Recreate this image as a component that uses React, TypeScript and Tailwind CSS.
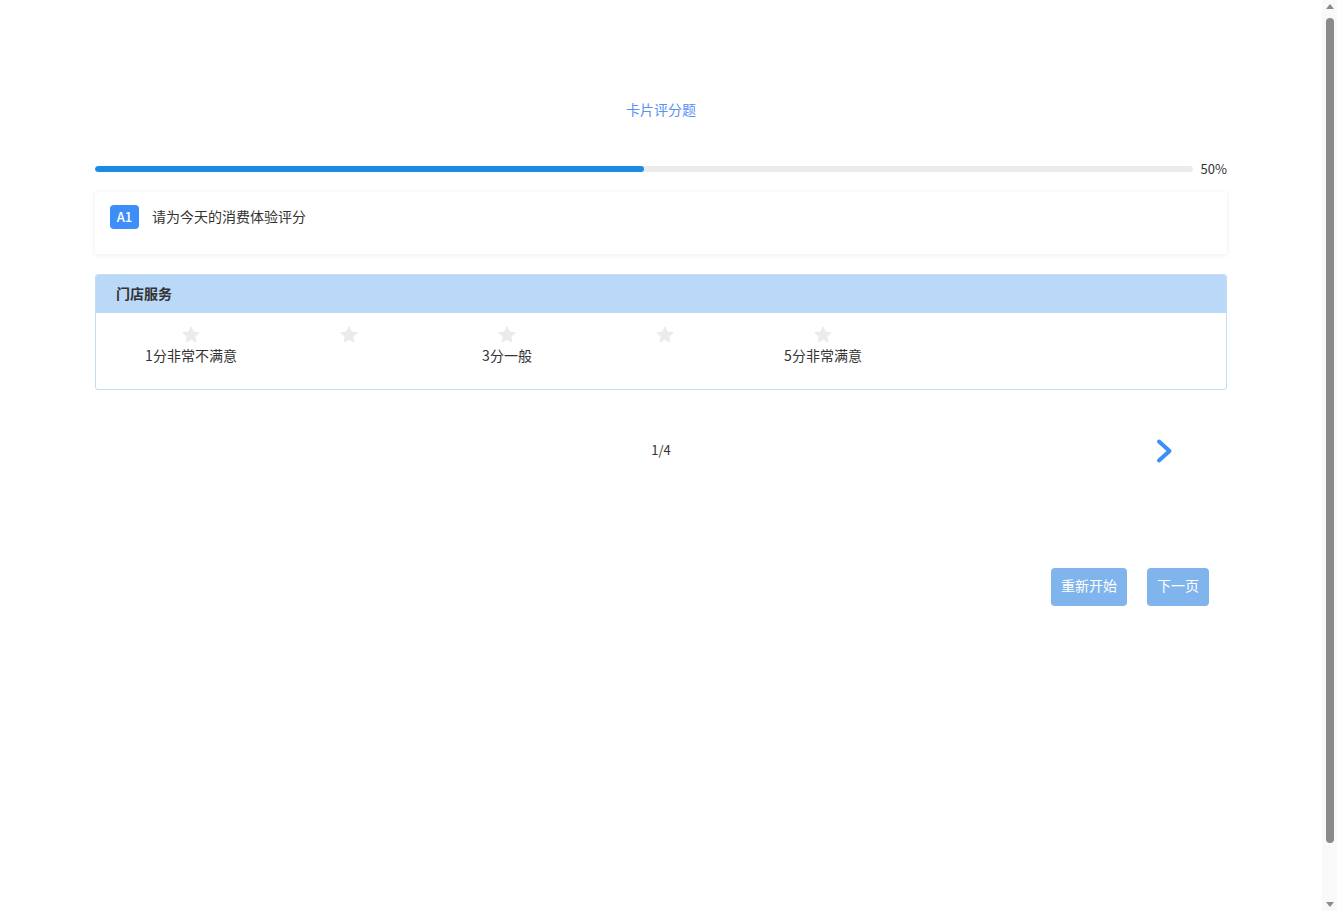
import React from "react";

const Star = () => (
  <svg width="20" height="19" viewBox="0 0 24 23" className="block">
    <path
      d="M12 0.8l3.3 7.1 7.7 0.9-5.7 5.3 1.5 7.6L12 17.9l-6.8 3.8 1.5-7.6L1 8.8l7.7-0.9z"
      fill="#ebebeb"
    />
  </svg>
);

const cols = ["1分非常不满意", "", "3分一般", "", "5分非常满意"];

export default function App() {
  return (
    <div
      className="h-[911px] overflow-hidden flex bg-white text-[#333]"
      style={{ fontFamily: '"Noto Sans CJK SC", "Noto Sans", sans-serif' }}
    >
      <div className="flex-1">
        <div className="w-[1132px] ml-[95px] pt-[99px]">
          <div className="text-center text-[14px] leading-[20px] text-[#5b8ff5]">卡片评分题</div>

          <div className="mt-[40px] flex items-center h-[20px]">
            <div className="flex-1 h-[6px] rounded-full bg-[#ebebeb] overflow-hidden">
              <div className="h-full w-1/2 rounded-full bg-[#1a8ce6]"></div>
            </div>
            <div className="ml-[8px] text-[13px] text-[#333] leading-[20px]">50%</div>
          </div>

          <div className="mt-[13px] h-[62px] bg-white shadow-[0_1px_5px_rgba(0,0,0,0.08)] flex items-start pl-[15px] pt-[13px]">
            <span className="inline-flex items-center justify-center w-[29px] h-[24px] rounded-[4px] bg-[#3d8ef8] text-white text-[13px] font-medium">
              A1
            </span>
            <span className="ml-[13px] text-[14px] leading-[22px] text-[#333]">请为今天的消费体验评分</span>
          </div>

          <div className="mt-[20px] border border-[#c4dcf5] rounded-[3px] overflow-hidden">
            <div className="h-[38px] bg-[#bad8f8] flex items-center pl-[20px] pb-[2px] text-[14px] font-bold text-[#333]">
              门店服务
            </div>
            <div className="h-[76px] flex pl-[16px] pt-[12px]">
              {cols.map((c, i) => (
                <div key={i} className="w-[158px] flex flex-col items-center">
                  <Star />
                  <div className="mt-[0px] text-[14px] leading-[22px] text-[#333] whitespace-nowrap">{c}</div>
                </div>
              ))}
            </div>
          </div>

          <div className="mt-[40px] relative h-[40px] flex items-center justify-center">
            <span className="text-[13px] text-[#333]">1/4</span>
            <svg
              className="absolute right-[52px] top-[8px]"
              width="20"
              height="26"
              viewBox="0 0 20 26"
              fill="none"
            >
              <path d="M4 3.5l10.5 9.5-10.5 9.5" stroke="#3d8ef8" strokeWidth="4" strokeLinecap="round" strokeLinejoin="round" />
            </svg>
          </div>

          <div className="mt-[98px] flex justify-end gap-[20px] pr-[18px]">
            <button className="h-[38px] w-[76px] pb-[4px] rounded-[4px] bg-[#80b4ec] text-white text-[14px]">重新开始</button>
            <button className="h-[38px] w-[62px] pb-[4px] rounded-[4px] bg-[#80b4ec] text-white text-[14px]">下一页</button>
          </div>
        </div>
      </div>
      <div className="w-[15px] bg-[#f9f9f9] flex flex-col items-center">
        <div className="mt-[4px] w-0 h-0 border-l-[4px] border-r-[4px] border-b-[5px] border-l-transparent border-r-transparent border-b-[#8a8a8a]"></div>
        <div className="mt-[9px] w-[8px] h-[825px] rounded-full bg-[#8a8a8a]"></div>
        <div className="mt-auto mb-[4px] w-0 h-0 border-l-[4px] border-r-[4px] border-t-[5px] border-l-transparent border-r-transparent border-t-[#8a8a8a]"></div>
      </div>
    </div>
  );
}
